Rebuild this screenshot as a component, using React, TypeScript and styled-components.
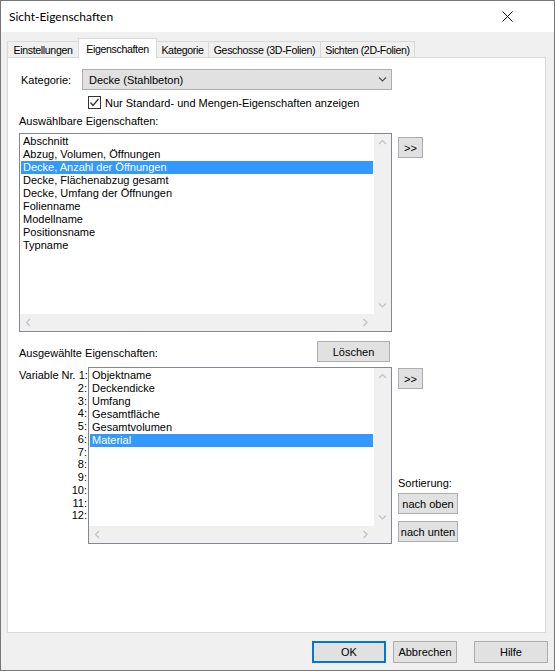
import React from "react";
import styled, { createGlobalStyle } from "styled-components";

const GlobalStyle = createGlobalStyle`
  html, body {
    margin: 0;
    padding: 0;
    background: #ffffff;
  }
  * {
    box-sizing: border-box;
  }
`;

const sans = `"Liberation Sans", Arial, sans-serif`;

const Window = styled.div`
  width: 555px;
  height: 671px;
  border: 1px solid #767676;
  background: #f0f0f0;
  display: flex;
  flex-direction: column;
  font-family: ${sans};
  font-size: 11px;
  color: #000;
`;

const TitleBar = styled.div`
  height: 31px;
  background: #ffffff;
  display: flex;
  align-items: center;
  justify-content: space-between;
  padding: 0 41px 0 8px;
  font-family: "Lato", ${sans};
  font-size: 12px;
`;

const Body = styled.div`
  flex: 1;
  display: flex;
  flex-direction: column;
  padding: 6px 0 0 6px;
`;

const TabStrip = styled.div`
  display: flex;
  align-items: flex-end;
  height: 19px;
  position: relative;
  z-index: 1;
`;

const Tab = styled.div<{ $active?: boolean; $w: number }>`
  width: ${(p) => p.$w}px;
  height: ${(p) => (p.$active ? 20 : 16)}px;
  margin-bottom: ${(p) => (p.$active ? -1 : 0)}px;
  margin-left: -1px;
  &:first-child {
    margin-left: 0;
  }
  border: 1px solid #d9d9d9;
  border-bottom: none;
  background: ${(p) => (p.$active ? "#ffffff" : "#f0f0f0")};
  position: relative;
  z-index: ${(p) => (p.$active ? 2 : 1)};
  display: flex;
  align-items: center;
  justify-content: center;
  padding-top: ${(p) => (p.$active ? 0 : 1)}px;
  font-size: 10.6px;
  letter-spacing: -0.35px;
  white-space: nowrap;
`;

const Panel = styled.div`
  width: 539px;
  height: 576px;
  border: 1px solid #d9d9d9;
  background: #ffffff;
  padding: 0 0 0 11px;
  display: flex;
  flex-direction: column;
`;

const Row = styled.div<{ $top: number }>`
  display: flex;
  margin-top: ${(p) => p.$top}px;
`;

const FieldLabel = styled.div<{ $w: number }>`
  width: ${(p) => p.$w}px;
  padding-left: 2px;
  align-self: center;
  white-space: nowrap;
`;

const Combo = styled.div`
  width: 310px;
  height: 21px;
  border: 1px solid #adadad;
  background: #e1e1e1;
  display: flex;
  align-items: center;
  justify-content: space-between;
  padding: 0 4px 0 6px;
`;

const CheckRow = styled.label`
  display: flex;
  align-items: center;
  gap: 4px;
  height: 13px;
  margin: 6px 0 0 69px;
  white-space: nowrap;
`;

const CheckBox = styled.span`
  width: 13px;
  height: 13px;
  border: 1px solid #333333;
  background: #ffffff;
  display: flex;
  align-items: center;
  justify-content: center;
`;

const SectionLabel = styled.div<{ $top: number }>`
  margin-top: ${(p) => p.$top}px;
  line-height: 13px;
  white-space: nowrap;
`;

const HeaderRow = styled.div`
  width: 373px;
  height: 21px;
  margin-top: 9px;
  display: flex;
  justify-content: space-between;
  padding-right: 2px;
`;

const HeaderLabel = styled.div`
  align-self: flex-end;
  line-height: 13px;
  margin-bottom: 2px;
`;

const Button = styled.div<{ $w: number; $h?: number; $top?: number; $default?: boolean }>`
  width: ${(p) => p.$w}px;
  height: ${(p) => p.$h ?? 21}px;
  margin-top: ${(p) => p.$top ?? 0}px;
  border: ${(p) => (p.$default ? "2px solid #0078d7" : "1px solid #adadad")};
  background: #e1e1e1;
  display: flex;
  align-items: center;
  justify-content: center;
  flex: none;
  white-space: nowrap;
`;

const SideColumn = styled.div`
  display: flex;
  flex-direction: column;
  margin-left: 6px;
`;

const SortLabel = styled.div`
  margin-top: 88px;
  line-height: 13px;
`;

const Numbers = styled.div`
  width: 69px;
  padding: 2px 1px 0 0;
  text-align: right;
  line-height: 12.75px;
  white-space: nowrap;
`;

const ListFrame = styled.div<{ $w: number; $h: number }>`
  width: ${(p) => p.$w}px;
  height: ${(p) => p.$h}px;
  border: 1px solid #828790;
  background: #ffffff;
  display: grid;
  grid-template-columns: 1fr 17px;
  grid-template-rows: 1fr 17px;
  flex: none;
`;

const ListItems = styled.div`
  padding: 1px 1px 0 1px;
  overflow: hidden;
`;

const Item = styled.div<{ $sel?: boolean }>`
  height: 13px;
  line-height: 13px;
  padding-left: 2px;
  white-space: nowrap;
  background: ${(p) => (p.$sel ? "#3399ff" : "transparent")};
  color: ${(p) => (p.$sel ? "#ffffff" : "#000000")};
`;

const ScrollV = styled.div`
  background: #f0f0f0;
  display: flex;
  flex-direction: column;
  justify-content: space-between;
`;

const ScrollH = styled.div`
  grid-column: 1 / 3;
  background: #f0f0f0;
  display: flex;
  justify-content: space-between;
  padding-right: 17px;
`;

const Arrow = styled.div`
  width: 17px;
  height: 17px;
  display: flex;
  align-items: center;
  justify-content: center;
`;

const Footer = styled.div`
  display: flex;
  justify-content: flex-end;
  gap: 7px;
  margin-top: 8px;
  padding-right: 6px;
  & > :last-child {
    margin-left: 10px;
  }
`;

const chevrons = {
  up: "1,5 4.5,1.5 8,5",
  down: "1,1.5 4.5,5 8,1.5",
  left: "5,1 1.5,4.5 5,8",
  right: "1.5,1 5,4.5 1.5,8",
};

function Chevron({ dir, color = "#c1c1c1" }: { dir: keyof typeof chevrons; color?: string }) {
  const vertical = dir === "up" || dir === "down";
  return (
    <svg width={vertical ? 9 : 7} height={vertical ? 7 : 9} viewBox={vertical ? "0 0 9 7" : "0 0 7 9"}>
      <polyline points={chevrons[dir]} fill="none" stroke={color} strokeWidth="1.2" />
    </svg>
  );
}

function ListBox({ w, h, items, selected }: { w: number; h: number; items: string[]; selected: number }) {
  return (
    <ListFrame $w={w} $h={h}>
      <ListItems>
        {items.map((it, i) => (
          <Item key={it} $sel={i === selected}>
            {it}
          </Item>
        ))}
      </ListItems>
      <ScrollV>
        <Arrow>
          <Chevron dir="up" />
        </Arrow>
        <Arrow>
          <Chevron dir="down" />
        </Arrow>
      </ScrollV>
      <ScrollH>
        <Arrow>
          <Chevron dir="left" />
        </Arrow>
        <Arrow>
          <Chevron dir="right" />
        </Arrow>
      </ScrollH>
    </ListFrame>
  );
}

const available = [
  "Abschnitt",
  "Abzug, Volumen, Öffnungen",
  "Decke, Anzahl der Öffnungen",
  "Decke, Flächenabzug gesamt",
  "Decke, Umfang der Öffnungen",
  "Folienname",
  "Modellname",
  "Positionsname",
  "Typname",
];

const chosen = ["Objektname", "Deckendicke", "Umfang", "Gesamtfläche", "Gesamtvolumen", "Material"];

const tabs = [
  { label: "Einstellungen", w: 72 },
  { label: "Eigenschaften", w: 79, active: true },
  { label: "Kategorie", w: 53 },
  { label: "Geschosse (3D-Folien)", w: 113 },
  { label: "Sichten (2D-Folien)", w: 95 },
];

export default function App() {
  return (
    <>
      <GlobalStyle />
      <Window>
        <TitleBar>
          <span>Sicht-Eigenschaften</span>
          <svg width="11" height="11" viewBox="0 0 11 11">
            <path d="M0.5 0.5 L10.5 10.5 M10.5 0.5 L0.5 10.5" stroke="#111" strokeWidth="1" />
          </svg>
        </TitleBar>
        <Body>
          <TabStrip>
            {tabs.map((t) => (
              <Tab key={t.label} $w={t.w} $active={t.active}>
                {t.label}
              </Tab>
            ))}
          </TabStrip>
          <Panel>
            <Row $top={11}>
              <FieldLabel $w={63}>Kategorie:</FieldLabel>
              <Combo>
                <span>Decke (Stahlbeton)</span>
                <Chevron dir="down" color="#505050" />
              </Combo>
            </Row>
            <CheckRow>
              <CheckBox>
                <svg width="11" height="11" viewBox="0 0 11 11">
                  <polyline points="1.5,5.5 4,8.5 9.5,2" fill="none" stroke="#333" strokeWidth="1.3" />
                </svg>
              </CheckBox>
              Nur Standard- und Mengen-Eigenschaften anzeigen
            </CheckRow>
            <SectionLabel $top={6}>Auswählbare Eigenschaften:</SectionLabel>
            <Row $top={5}>
              <ListBox w={373} h={199} items={available} selected={2} />
              <SideColumn>
                <Button $w={25} $top={4}>
                  &gt;&gt;
                </Button>
              </SideColumn>
            </Row>
            <HeaderRow>
              <HeaderLabel>Ausgewählte Eigenschaften:</HeaderLabel>
              <Button $w={73}>Löschen</Button>
            </HeaderRow>
            <Row $top={5}>
              <Numbers>
                {["Variable Nr. 1:", "2:", "3:", "4:", "5:", "6:", "7:", "8:", "9:", "10:", "11:", "12:"].map((n) => (
                  <div key={n}>{n}</div>
                ))}
              </Numbers>
              <ListBox w={304} h={177} items={chosen} selected={5} />
              <SideColumn>
                <Button $w={25} $top={1}>
                  &gt;&gt;
                </Button>
                <SortLabel>Sortierung:</SortLabel>
                <Button $w={60} $top={3}>
                  nach oben
                </Button>
                <Button $w={60} $top={7}>
                  nach unten
                </Button>
              </SideColumn>
            </Row>
          </Panel>
          <Footer>
            <Button $w={74} $h={22} $default>
              OK
            </Button>
            <Button $w={64} $h={22}>
              Abbrechen
            </Button>
            <Button $w={74} $h={22}>
              Hilfe
            </Button>
          </Footer>
        </Body>
      </Window>
    </>
  );
}
